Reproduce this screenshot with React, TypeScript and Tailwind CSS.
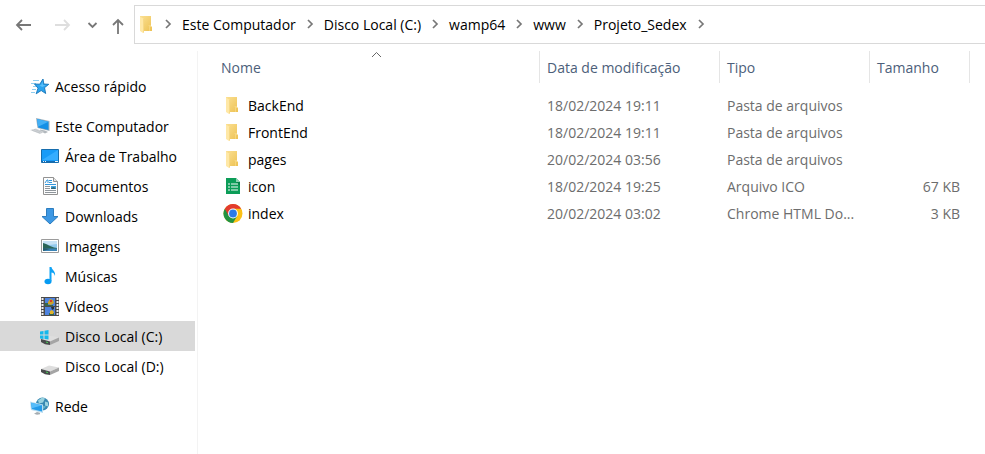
import type { ReactNode } from 'react';

function FolderIcon({ width = 20 }: { width?: number }) {
  return (
    <svg width={width} height="20" viewBox={`0 0 ${width} 20`} className="shrink-0" aria-hidden="true">
      <defs>
        <linearGradient id="folderBack" x1="0" y1="0" x2="1" y2="1">
          <stop offset="0" stopColor="#fbe093" />
          <stop offset="1" stopColor="#edc253" />
        </linearGradient>
      </defs>
      <path d="M3 1h11v10l1 1v4H3z" fill="url(#folderBack)" />
      <path d="M11 10h3v2h-1v4h-1v-5z" fill="#fbe08f" opacity="0.6" />
      <path d="M3 1.5L7 4v13.5L6 18l-3-2z" fill="#ffe8a6" />
      <path d="M6.5 4v13.5" stroke="#f3d279" strokeWidth="0.7" />
    </svg>
  );
}

function SheetIcon() {
  return (
    <svg width="20" height="20" viewBox="0 0 20 20" aria-hidden="true">
      <path d="M3 1h10l4 4v12H3z" fill="#0c9d58" />
      <path d="M13 1l4 4h-4z" fill="#8ed1b1" />
      <path d="M13 5h4v4z" fill="#08834a" />
      <path d="M5 7h2M8 7h7M5 10h2M8 10h7M5 13h2M8 13h7" stroke="#f1f9f5" strokeWidth="1.2" />
    </svg>
  );
}

function ChromeIcon() {
  return (
    <svg width="20" height="20" viewBox="0 0 20 20" aria-hidden="true">
      <g transform="translate(0 -1)">
        <circle cx="10" cy="10.500" r="9.500" fill="#fbc116" />
        <path d="M10 10.500L1.800 5.700A9.500 9.500 0 0 0 10 20L14.200 13z" fill="#229342" />
        <path d="M1.800 5.700A9.500 9.500 0 0 1 18.200 5.700H10L5.800 13z" fill="#e33b2e" />
        <circle cx="10" cy="10.500" r="4.900" fill="#fff" />
        <circle cx="10" cy="10.500" r="3.900" fill="#2a79e8" />
      </g>
    </svg>
  );
}

function Glyph({ children }: { children: ReactNode }) {
  return (
    <svg width="20" height="20" viewBox="0 0 20 20" fill="none" className="shrink-0" aria-hidden="true">
      {children}
    </svg>
  );
}

const starIcon = (
  <Glyph>
    <path d="M3 3.500h6M1 6.500h5M3 9.500h3M2 12.500h4M1 15.500h4" stroke="#8ecdf0" />
    <path d="M13 2l.8 5 5 .3-4.300 3.400 1.200 5.800-4.500-3-5 3.300 1.800-5.600L4.500 7l5.300.2z" fill="#2ba3ee" stroke="#1675b8" strokeWidth="0.9" />
    <path d="M12.300 4.500l.6 3.500 3 .3-3.600 1.700-3-1.500 2-.5z" fill="#5dc1fa" />
  </Glyph>
);

const computerIcon = (
  <Glyph>
    <path d="M6 1l13.500 3v10L7.500 11z" fill="#a2b2bd" />
    <path d="M7 2l11.500 2.700v8.300L8.200 10.500z" fill="#1590e6" />
    <path d="M7 2l11.500 2.700-10.500 5z" fill="#43b0f6" />
    <path d="M10 12.500l5 1 3 1.500-3 1.500-5-2.500z" fill="#b2b8bd" />
    <path d="M0 13l6-1.500 8 3.500-4 2z" fill="#d3d6d9" />
    <path d="M2 13.200l8 2.800M4 12.300l8 3" stroke="#b8bdc2" strokeWidth="0.7" />
  </Glyph>
);

const desktopIcon = (
  <Glyph>
    <path d="M1.500 2.500h17v13h-17z" fill="#189bf7" stroke="#176dad" />
    <path d="M2 13L18 3v10z" fill="#35adff" />
    <path d="M2 14.500h16" stroke="#116bb2" />
    <path d="M3 14.500h1M5 14.500h1M15 14.500h3" stroke="#e8f5ff" />
  </Glyph>
);

const documentIcon = (
  <Glyph>
    <path d="M3.500 .5h10l4 4v13h-14z" fill="#fdfdfd" stroke="#929292" />
    <path d="M13.500 .5v4h4" fill="#e8e8e8" stroke="#929292" />
    <path d="M5 6l2-3h1v3M9 3.500h3M9 5.500h3M5 7.500h11" stroke="#3597dc" />
    <path d="M5 9.500h5M5 11.500h5M5 13.500h11M5 15.500h11" stroke="#8f969c" />
    <path d="M11 9h5v3h-5z" fill="#3fa2df" />
    <path d="M11 11l3-1 2 2h-5z" fill="#356779" />
  </Glyph>
);

const downloadIcon = (
  <Glyph>
    <path d="M6.500 1.500h7v8h4.500L10 17 2 9.500h4.500z" fill="#3d98e4" stroke="#2d7dbe" strokeLinejoin="round" />
  </Glyph>
);

const pictureIcon = (
  <Glyph>
    <path d="M1.500 2.500h17v13h-17z" fill="#fff" stroke="#9b9b9b" />
    <path d="M3 4h14v10H3z" fill="#92c9ed" />
    <path d="M3 4h14v3L9 8 3 6z" fill="#c7e2f5" />
    <path d="M3 6l3 1 4 2 4 1.500 3 .5v1H3z" fill="#2c6658" />
    <path d="M3 11.500h14V14H3z" fill="#3a84b7" />
    <path d="M3 11l7 1-7 2z" fill="#285c6c" />
  </Glyph>
);

const musicIcon = (
  <Glyph>
    <ellipse cx="8" cy="14.500" rx="3.500" ry="2.800" fill="#069bf2" />
    <path d="M9.500 0h2c.2 3 4.500 4 3.500 9-.6-2.500-2-3.500-3.500-3.500V14h-2z" fill="#10a3f5" />
  </Glyph>
);

const videoIcon = (
  <Glyph>
    <path d="M1 0h18v19H1z" fill="#4b4b4b" />
    <path d="M5 1h10v8H5zM5 10h10v8H5z" fill="#4d83df" />
    <path d="M2.500 1v18M17.500 1v18" stroke="#efefef" strokeWidth="2" strokeDasharray="2 1" />
    <path d="M8 5l2-3 3 1 1 3-3 2-3-1z" fill="#cda32a" />
    <path d="M10 3h2v2h-2z" fill="#d83f2a" />
    <path d="M5 6h3v2h5v1H5zM9 16h5v2H9z" fill="#356848" />
    <path d="M11 10h3v2l-2 1z" fill="#283139" />
    <path d="M10 14l2-1 2 2-1 2h-3z" fill="#e3b42a" />
  </Glyph>
);

const drive = (
  <>
    <path d="M1 12l8-3.500 10 2-9 4z" fill="#dedede" />
    <path d="M1 12l9 2.500v3.500l-5-.8-4-2.200z" fill="#494b4c" />
    <path d="M10 14.500l9-4v3.500l-9 4z" fill="#a5a5a5" />
    <path d="M6 15l2 .7" stroke="#49cc58" />
  </>
);

const windowsDriveIcon = (
  <Glyph>
    {drive}
    <path d="M0 4.500l3.500-.5v3.500H0zM4.500 3.800L8.500 3v4.500h-4zM0 8.500h3.500V12L0 11.500zM4.500 8.500h4V12.500l-4-.5z" fill="#14b8ec" />
  </Glyph>
);

const driveIcon = <Glyph>{drive}</Glyph>;

const networkIcon = (
  <Glyph>
    <circle cx="12.500" cy="7" r="6.500" fill="#3789b2" />
    <path d="M8 3.500l4-3 3 1-2 4-4 1zM15 4.500l3 1v4l-3-1z" fill="#9bd3df" />
    <path d="M12 8.500l4 1-3 3z" fill="#6bb5c9" />
    <path d="M0 4.500l13 3v8.500L1 13z" fill="#b9ddf1" />
    <path d="M1 5.700l11 2.600v6.200L1.800 12z" fill="#249be9" />
    <path d="M1 5.700l11 2.600-10 3z" fill="#57bdfa" />
    <path d="M7 15l3 .7v1.500l-3 .5-3-1z" fill="#a5adb2" />
  </Glyph>
);

function ChevronRight() {
  return (
    <svg width="28" height="20" viewBox="0 0 28 20" fill="none" className="shrink-0" aria-hidden="true">
      <path d="M12 5l4 4-4 4" stroke="#777" strokeWidth="1.700" />
    </svg>
  );
}

const places = [
  { label: 'Acesso rápido', icon: starIcon, style: 'pl-[30px] mb-[10px]' },
  { label: 'Este Computador', icon: computerIcon, style: 'pl-[30px]' },
  { label: 'Área de Trabalho', icon: desktopIcon, style: 'pl-10' },
  { label: 'Documentos', icon: documentIcon, style: 'pl-10' },
  { label: 'Downloads', icon: downloadIcon, style: 'pl-10' },
  { label: 'Imagens', icon: pictureIcon, style: 'pl-10' },
  { label: 'Músicas', icon: musicIcon, style: 'pl-10' },
  { label: 'Vídeos', icon: videoIcon, style: 'pl-10' },
  { label: 'Disco Local (C:)', icon: windowsDriveIcon, style: 'pl-10 bg-[#d9d9d9]' },
  { label: 'Disco Local (D:)', icon: driveIcon, style: 'pl-10 mb-[10px]' },
  { label: 'Rede', icon: networkIcon, style: 'pl-[30px]' },
];

const path = ['Este Computador', 'Disco Local (C:)', 'wamp64', 'www', 'Projeto_Sedex'];

const files = [
  { name: 'BackEnd', date: '18/02/2024 19:11', type: 'Pasta de arquivos', size: '', icon: <FolderIcon /> },
  { name: 'FrontEnd', date: '18/02/2024 19:11', type: 'Pasta de arquivos', size: '', icon: <FolderIcon /> },
  { name: 'pages', date: '20/02/2024 03:56', type: 'Pasta de arquivos', size: '', icon: <FolderIcon /> },
  { name: 'icon', date: '18/02/2024 19:25', type: 'Arquivo ICO', size: '67 KB', icon: <SheetIcon /> },
  { name: 'index', date: '20/02/2024 03:02', type: 'Chrome HTML Do...', size: '3 KB', icon: <ChromeIcon /> },
];

function Toolbar() {
  return (
    <header className="flex pt-[5px]">
      <div className="flex w-[134px] shrink-0 items-center pl-3">
        <button type="button" aria-label="Voltar" className="w-[39px]">
          <svg width="22" height="20" viewBox="0 0 22 20" fill="none" stroke="#777" strokeWidth="1.800">
            <path d="M19 10H5M10 5l-5 5 5 5" />
          </svg>
        </button>
        <button type="button" aria-label="Avançar" className="w-[31px]" disabled>
          <svg width="22" height="20" viewBox="0 0 22 20" fill="none" stroke="#dedede" strokeWidth="1.800">
            <path d="M4 10h14M13 5l5 5-5 5" />
          </svg>
        </button>
        <button type="button" aria-label="Locais recentes" className="w-6">
          <svg width="20" height="20" viewBox="0 0 20 20" fill="none" stroke="#777" strokeWidth="1.800">
            <path d="M6.500 8l4 4 4-4" />
          </svg>
        </button>
        <button type="button" aria-label="Acima">
          <svg width="24" height="20" viewBox="0 0 24 20" fill="none" stroke="#777" strokeWidth="1.800">
            <path d="M12 19V5M7 10l5-5 5 5" />
          </svg>
        </button>
      </div>
      <nav aria-label="Caminho" className="flex h-[39px] flex-1 items-center border-y border-l border-[#d9d9d9] pl-[2px]">
        <FolderIcon width={17} />
        <ChevronRight />
        {path.map((part) => (
          <div key={part} className="flex items-center">
            <button type="button" className="whitespace-nowrap">{part}</button>
            <ChevronRight />
          </div>
        ))}
      </nav>
    </header>
  );
}

function HeaderCell({ children, inset }: { children: ReactNode; inset: string }) {
  return (
    <th scope="col" className="p-0 pb-[9px] text-left font-normal text-[#4c607a]">
      <div className={`relative flex h-8 items-center border-r border-[#e5e5e5] pt-[2px] ${inset}`}>{children}</div>
    </th>
  );
}

export default function App() {
  return (
    <div className="flex min-h-screen flex-col bg-white font-['Open_Sans','Noto_Sans',sans-serif] text-[14px] leading-5 text-black">
      <Toolbar />
      <div className="flex flex-1 pt-[7px]">
        <aside className="w-[198px] shrink-0 border-r border-[#f3f3f3] pr-[2px] pt-5">
          <nav aria-label="Locais">
            {places.map((place) => (
              <a key={place.label} href="#" className={`flex h-[30px] items-center gap-[5px] whitespace-nowrap pt-[2px] ${place.style}`}>
                {place.icon}
                {place.label}
              </a>
            ))}
          </nav>
        </aside>
        <main className="min-w-0 flex-1 pr-[15px]">
          <table className="w-full table-fixed border-collapse whitespace-nowrap">
            <colgroup>
              <col />
              <col className="w-[180px]" />
              <col className="w-[150px]" />
              <col className="w-[100px]" />
            </colgroup>
            <thead>
              <tr>
                <HeaderCell inset="pl-[23px]">
                  Nome
                  <svg className="absolute left-1/2 top-0 ml-[2px]" width="11" height="7" viewBox="0 0 11 7" fill="none" aria-hidden="true">
                    <path d="M1 6l4.500-4.500L10 6" stroke="#666" />
                  </svg>
                </HeaderCell>
                <HeaderCell inset="pl-[7px]">Data de modificação</HeaderCell>
                <HeaderCell inset="pl-[7px]">Tipo</HeaderCell>
                <HeaderCell inset="pl-[7px]">Tamanho</HeaderCell>
              </tr>
            </thead>
            <tbody className="text-[#6d6d6d]">
              {files.map((file) => (
                <tr key={file.name} className="h-[27px]">
                  <td className="p-0 pl-[25px] text-black">
                    <div className="flex items-center gap-[5px]">
                      {file.icon}
                      {file.name}
                    </div>
                  </td>
                  <td className="p-0 pl-[7px]">{file.date}</td>
                  <td className="p-0 pl-[7px]">{file.type}</td>
                  <td className="p-0 pr-[10px] text-right">{file.size}</td>
                </tr>
              ))}
            </tbody>
          </table>
        </main>
      </div>
    </div>
  );
}
